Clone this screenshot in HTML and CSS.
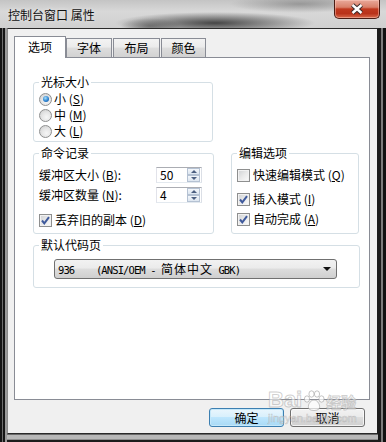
FILE: index.html
```html
<!DOCTYPE html>
<html lang="zh-CN">
<head>
    <meta charset="UTF-8">
    <meta name="viewport" content="width=device-width, initial-scale=1.0">
    <title>控制台窗口 属性</title>
    <link rel="stylesheet" href="styles.css">
</head>
<body>
    <div class="window">
        <div class="titlebar">
            <span class="title">控制台窗口 属性</span>
            <div class="close-btn">
                <svg width="16" height="12" viewBox="0 0 16 12">
                    <path d="M3.5 2 L12.5 10 M12.5 2 L3.5 10" stroke="#3b2c2c" stroke-width="4.4"/>
                    <path d="M3.5 2 L12.5 10 M12.5 2 L3.5 10" stroke="#ffffff" stroke-width="2.4"/>
                </svg>
            </div>
        </div>

        <div class="client">
            <div class="tabs">
                <div class="tab active">选项</div>
                <div class="tab">字体</div>
                <div class="tab tab-wide">布局</div>
                <div class="tab tab-narrow">颜色</div>
            </div>

            <div class="panel">
                <div class="groups">
                    <!-- 光标大小 -->
                    <fieldset class="group g-cursor">
                        <legend>光标大小</legend>
                        <div class="opt"><span class="radio on"></span><span>小 (<u>S</u>)</span></div>
                        <div class="opt"><span class="radio"></span><span>中 (<u>M</u>)</span></div>
                        <div class="opt"><span class="radio"></span><span>大 (<u>L</u>)</span></div>
                    </fieldset>

                    <!-- 命令记录 -->
                    <fieldset class="group g-history">
                        <legend>命令记录</legend>
                        <div class="field">
                            <span>缓冲区大小 (<u>B</u>):</span>
                            <div class="spin">
                                <span class="spin-value">50</span>
                                <span class="spin-btns"><span class="spin-up"></span><span class="spin-down"></span></span>
                            </div>
                        </div>
                        <div class="field field-second">
                            <span>缓冲区数量 (<u>N</u>):</span>
                            <div class="spin">
                                <span class="spin-value">4</span>
                                <span class="spin-btns"><span class="spin-up"></span><span class="spin-down"></span></span>
                            </div>
                        </div>
                        <div class="opt opt-discard">
                            <span class="check on"><svg width="11" height="11" viewBox="0 0 11 11"><path d="M2 5.5 L4.3 8.3 L9 2.2" fill="none" stroke="#3f5a9c" stroke-width="2"/></svg></span>
                            <span>丢弃旧的副本 (<u>D</u>)</span>
                        </div>
                    </fieldset>

                    <!-- 编辑选项 -->
                    <fieldset class="group g-edit">
                        <legend>编辑选项</legend>
                        <div class="opt"><span class="check"></span><span>快速编辑模式 (<u>Q</u>)</span></div>
                        <div class="opt opt-insert">
                            <span class="check on"><svg width="11" height="11" viewBox="0 0 11 11"><path d="M2 5.5 L4.3 8.3 L9 2.2" fill="none" stroke="#3f5a9c" stroke-width="2"/></svg></span>
                            <span>插入模式 (<u>I</u>)</span>
                        </div>
                        <div class="opt opt-auto">
                            <span class="check on"><svg width="11" height="11" viewBox="0 0 11 11"><path d="M2 5.5 L4.3 8.3 L9 2.2" fill="none" stroke="#3f5a9c" stroke-width="2"/></svg></span>
                            <span>自动完成 (<u>A</u>)</span>
                        </div>
                    </fieldset>

                    <!-- 默认代码页 -->
                    <fieldset class="group g-codepage">
                        <legend>默认代码页</legend>
                        <div class="combo">
                            <span class="combo-text">936    (ANSI/OEM - <span class="cjk">简体中文</span> GBK)</span>
                            <span class="combo-arrow"></span>
                        </div>
                    </fieldset>
                </div>
            </div>

            <div class="buttons">
                <button class="btn default">确定</button>
                <button class="btn">取消</button>
            </div>
        </div>

        <div class="watermark">
            <div class="wm-logo">
                <span>Bai</span>
                <svg width="22" height="22" viewBox="0 0 22 22">
                    <g fill="rgba(255,255,255,0.7)" stroke="rgba(150,150,150,0.55)" stroke-width="1">
                        <ellipse cx="4" cy="9" rx="2.6" ry="3.2"/>
                        <ellipse cx="8.5" cy="4" rx="2.6" ry="3.2"/>
                        <ellipse cx="14" cy="4" rx="2.6" ry="3.2"/>
                        <ellipse cx="18.5" cy="9" rx="2.6" ry="3.2"/>
                        <path d="M11 10 C7 10 4 16 6 19 C8 21 14 21 16 19 C18 16 15 10 11 10 Z"/>
                    </g>
                </svg>
                <span class="wm-cn">经验</span>
            </div>
            <div class="wm-url">jingyan.baidu.com</div>
        </div>
    </div>
</body>
</html>
```

FILE: styles.css
```css
/* Base */
* {
    box-sizing: border-box;
}

body {
    margin: 0;
    background: #111;
    font-family: "Noto Sans CJK SC", "Liberation Sans", sans-serif;
    font-size: 12px;
    line-height: 14px;
    color: #000;
}

/* Fenêtre (cadre Aero) */
.window {
    position: relative;
    width: 386px;
    height: 442px;
    display: flex;
    flex-direction: column;
    background:
        linear-gradient(to right, #151515 0 2px, #6e6e6e 2px 3px, #151515 3px 5px, #9a9a9a 5px 7px, transparent 7px) left top / 7px 100% no-repeat,
        linear-gradient(to left, #111 0 3px, #7c7c7c 3px 5px, #1b1b1b 5px 8px, transparent 8px) right top / 8px 100% no-repeat,
        linear-gradient(to top, #1c1c1c 0 2px, #8e8e8e 2px 3px, #b8b8b8 3px 7px, #6a6a6a 7px 8px) left bottom / 100% 8px no-repeat,
        #333;
}

/* Barre de titre */
.titlebar {
    height: 28px;
    flex: none;
    display: flex;
    justify-content: space-between;
    align-items: flex-start;
    padding: 0 6px 0 8px;
    background:
        radial-gradient(ellipse 100px 11px at 215px 23px, rgba(45, 45, 45, 0.85), rgba(45, 45, 45, 0)),
        radial-gradient(ellipse 70px 9px at 300px 4px, rgba(110, 110, 110, 0.55), rgba(110, 110, 110, 0)),
        radial-gradient(ellipse 30px 8px at 150px 26px, rgba(60, 60, 60, 0.5), rgba(60, 60, 60, 0)),
        linear-gradient(#c4c4c4, #d8d8d8 40%, #d0d0d0);
}

.title {
    margin-top: 8px;
    color: #111;
    text-shadow: 0 0 4px rgba(255, 255, 255, 0.6);
}

.close-btn {
    width: 46px;
    height: 19px;
    display: flex;
    align-items: center;
    justify-content: center;
    border: 1px solid #4a1c14;
    border-top: none;
    border-radius: 0 0 5px 5px;
    background: linear-gradient(#e9a99a 0%, #d9806a 40%, #c0391f 50%, #b9321a 75%, #d86a4c 100%);
    box-shadow: inset 0 0 0 1px rgba(255, 210, 200, 0.45);
}

/* Zone client */
.client {
    flex: 1;
    margin: 0 8px 8px 7px;
    padding: 7px 7px 0 6px;
    background: #f0f0f0;
    border-top: 1px solid #2a2a2a;
    border-bottom: 1px solid #2a2a2a;
    border-left: 1px solid #8c8c8c;
    border-right: 1px solid #1c1c1c;
    display: flex;
    flex-direction: column;
}

/* Onglets */
.tabs {
    height: 21px;
    display: flex;
    align-items: flex-end;
}

.tab {
    width: 46px;
    height: 19px;
    padding-top: 2px;
    text-align: center;
    border: 1px solid #898c95;
    border-bottom: none;
    background: linear-gradient(#f3f3f3 0%, #ebebeb 45%, #dddddd 50%, #d2d2d2 100%);
}

.tab-wide {
    width: 47px;
    margin-left: 1px;
}

.tab-narrow {
    width: 45px;
    margin-left: 1px;
}

.tab.active {
    position: relative;
    z-index: 1;
    width: 52px;
    height: 22px;
    margin-bottom: -1px;
    padding-top: 3px;
    background: #fff;
}

.panel {
    width: 356px;
    height: 343px;
    flex: none;
    background: #fff;
    border: 1px solid #898c95;
    padding: 17px 0 0 18px;
}

/* Groupes */
.groups {
    display: grid;
    grid-template-columns: 181px 128px;
    column-gap: 17px;
    row-gap: 4px;
    align-items: stretch;
}

.group {
    margin: 0;
    min-width: 0;
    border: 1px solid #d5dfe5;
    border-radius: 3px;
    padding: 2px 4px 2px 5px;
}

.group legend {
    padding: 0 2px;
    line-height: 14px;
}

.g-cursor {
    width: 180px;
    grid-column: 1;
}

.g-history {
    grid-column: 1;
    padding-top: 7px;
    padding-bottom: 5px;
}

.g-edit {
    grid-column: 2;
    padding-top: 7px;
}

.g-codepage {
    grid-column: 1 / 3;
    width: 327px;
    padding-top: 7px;
    padding-bottom: 8px;
}

/* Lignes d'options */
.opt {
    height: 16px;
    display: flex;
    align-items: center;
    gap: 2px;
}

.opt-discard {
    margin-top: 9px;
}

.opt-insert {
    margin-top: 8px;
}

.opt-auto {
    margin-top: 4px;
}

.radio {
    width: 13px;
    height: 13px;
    flex: none;
    border-radius: 50%;
    border: 1px solid #8e8f8f;
    background: radial-gradient(circle at 60% 65%, #f6f6f6 0%, #e6e6e6 45%, #c9c9c9 100%);
    display: flex;
    align-items: center;
    justify-content: center;
}

.radio.on::after {
    content: "";
    width: 6px;
    height: 6px;
    border-radius: 50%;
    background: radial-gradient(circle at 40% 35%, #a8e0fb 0%, #2c82d0 55%, #0f4c94 100%);
}

.check {
    width: 13px;
    height: 13px;
    flex: none;
    margin-right: 1px;
    border: 1px solid #8e8f8f;
    background: linear-gradient(135deg, #cfd1d3 0%, #e9e9e9 50%, #fbfbfb 100%);
    box-shadow: inset 0 0 0 1px #f2f2f2;
    display: flex;
    align-items: center;
    justify-content: center;
}

/* Champs numériques */
.field {
    height: 16px;
    display: grid;
    grid-template-columns: 117px 46px;
    align-items: center;
}

.field-second {
    margin-top: 4px;
}

.spin {
    height: 16px;
    display: flex;
    border: 1px solid #abadb3;
    border-color: #abadb3 #dbdfe6 #e3e9ef #e2e3ea;
    background: #fff;
}

.spin-value {
    flex: 1;
    padding-left: 3px;
    line-height: 14px;
}

.spin-btns {
    width: 14px;
    display: flex;
    flex-direction: column;
    padding: 0 1px 0 0;
}

.spin-up,
.spin-down {
    flex: 1;
    display: flex;
    align-items: center;
    justify-content: center;
    border: 1px solid #b5c2d3;
    background: linear-gradient(#f4f7fb, #dde6f0);
}

.spin-up::after {
    content: "";
    border-left: 3px solid transparent;
    border-right: 3px solid transparent;
    border-bottom: 3px solid #4c5f80;
}

.spin-down::after {
    content: "";
    border-left: 3px solid transparent;
    border-right: 3px solid transparent;
    border-top: 3px solid #4c5f80;
}

/* Liste déroulante */
.combo {
    width: 283px;
    height: 20px;
    margin-left: 15px;
    display: flex;
    align-items: center;
    justify-content: space-between;
    padding: 0 5px 0 3px;
    border: 1px solid #707070;
    border-radius: 3px;
    background: linear-gradient(#f2f2f2 0%, #ebebeb 45%, #dddddd 50%, #cfcfcf 100%);
}

.combo-text {
    font-family: "DejaVu Sans Mono", monospace;
    font-size: 10.5px;
    letter-spacing: -0.9px;
    white-space: pre;
}

.combo-text .cjk {
    font-family: "Noto Sans CJK SC", sans-serif;
    font-size: 12px;
    letter-spacing: 1px;
}

.combo-arrow {
    border-left: 4px solid transparent;
    border-right: 4px solid transparent;
    border-top: 4px solid #111;
}

/* Boutons */
.buttons {
    display: flex;
    justify-content: flex-end;
    gap: 6px;
    margin-top: 8px;
    padding-right: 5px;
}

.btn {
    width: 75px;
    height: 19px;
    padding: 0;
    font: inherit;
    color: #000;
    border: 1px solid #707070;
    border-radius: 3px;
    background: linear-gradient(#f2f2f2 0%, #ebebeb 45%, #dddddd 50%, #cfcfcf 100%);
    box-shadow: inset 0 0 0 1px rgba(255, 255, 255, 0.7);
}

.btn.default {
    border-color: #3c7fb1;
    background: linear-gradient(#eaf6fd 0%, #d9f0fc 45%, #bee6fd 50%, #a7d9f5 100%);
    box-shadow: inset 0 0 0 1px #c5e8fa;
}

/* Filigrane */
.watermark {
    position: absolute;
    left: 268px;
    top: 388px;
    pointer-events: none;
}

.wm-logo {
    display: flex;
    align-items: flex-end;
    gap: 1px;
    font-family: "Liberation Sans", sans-serif;
    font-weight: bold;
    font-size: 22px;
    line-height: 24px;
    color: rgba(255, 255, 255, 0.55);
    -webkit-text-stroke: 1px rgba(150, 150, 150, 0.45);
}

.wm-cn {
    font-family: "Noto Sans CJK SC", sans-serif;
    font-size: 15px;
    line-height: 20px;
}

.wm-url {
    font-family: "Liberation Sans", sans-serif;
    font-size: 11px;
    line-height: 12px;
    color: rgba(255, 255, 255, 0.5);
    -webkit-text-stroke: 0.6px rgba(140, 140, 140, 0.45);
}
```
